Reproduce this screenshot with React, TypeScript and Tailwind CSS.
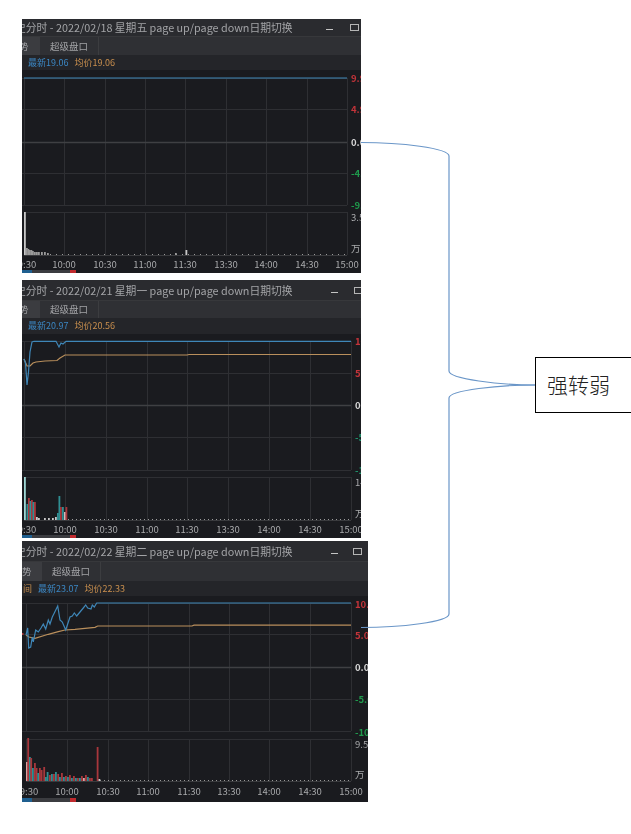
const TIMES = ["9:30", "10:00", "10:30", "11:00", "11:30", "13:30", "14:00", "14:30", "15:00"];

type Bar = [number, number, string];

const RED = "#a8373c";
const TEAL = "#2f8f93";
const GREY = "#9a9a9a";

type ChartData = {
  x: number;
  y: number;
  w: number;
  h: number;
  gridX: number[];
  gridY: number[];
  volTop: number;
  volBottom: number;
  labelX: number;
  timeY: number;
  labels: { text: string; y: number; color: string; bold?: boolean }[];
  price: string;
  avg?: string;
  bars: Bar[];
  stripY: number;
  stripH: number;
  edgeMarks?: number[];
};

// baseline ticks under the volume chart
function ticks(from: number, to: number, step: number): Bar[] {
  const out: Bar[] = [];
  for (let x = from; x < to; x += step) out.push([x, -1, GREY]);
  return out;
}

function Chart({ d }: { d: ChartData }) {
  const left = d.gridX[0];
  const right = d.gridX[d.gridX.length - 1];
  const mid = d.gridY[2];
  return (
    <svg className="block" width={d.w} height={d.h} viewBox={`${d.x} ${d.y} ${d.w} ${d.h}`}>
      <rect x={d.x} y={d.y} width={d.w} height={d.h} fill="#1a1b1f" />
      {d.gridX.map((x) => (
        <g key={x}>
          <line x1={x + 0.5} x2={x + 0.5} y1={d.gridY[0]} y2={d.gridY[4]} stroke="#2e2f33" />
          <line x1={x + 0.5} x2={x + 0.5} y1={d.volTop} y2={d.volBottom} stroke="#2e2f33" />
        </g>
      ))}
      {d.gridY.map((y) => (
        <line key={y} x1={d.x} x2={right} y1={y + 0.5} y2={y + 0.5} stroke="#2e2f33" />
      ))}
      <line x1={d.x} x2={right} y1={mid + 0.5} y2={mid + 0.5} stroke="#3f4043" strokeWidth="1.5" />
      <line x1={left} x2={right} y1={d.volTop + 0.5} y2={d.volTop + 0.5} stroke="#2e2f33" />
      <line x1={left} x2={right} y1={d.volBottom + 0.5} y2={d.volBottom + 0.5} stroke="#3a3b3e" />

      {d.bars.map(([x, top, color], i) => (
        <rect
          key={i}
          x={x}
          y={top < 0 ? d.volBottom + top : top}
          width={top < 0 ? 1 : 1.8}
          height={top < 0 ? -top : d.volBottom - top}
          fill={color}
        />
      ))}
      {d.edgeMarks?.map((y) => (
        <rect key={y} x={d.x} y={y} width="1.5" height="2" fill={RED} />
      ))}

      {d.avg && <polyline points={d.avg} fill="none" stroke="#b98f5c" strokeWidth="1.2" />}
      <polyline points={d.price} fill="none" stroke="#3f87b8" strokeWidth="1.2" />

      {d.labels.map((l) => (
        <text
          key={l.text}
          x={d.labelX}
          y={l.y}
          dominantBaseline="central"
          fontSize="9.5"
          fontWeight={l.bold ? 700 : 400}
          fill={l.color}
        >
          {l.text}
        </text>
      ))}
      {TIMES.map((t, i) => (
        <text
          key={t}
          x={i === 0 ? d.gridX[0] + 3 : d.gridX[i]}
          y={d.timeY}
          textAnchor="middle"
          dominantBaseline="central"
          fontSize="9.5"
          fill="#a9aaac"
        >
          {t}
        </text>
      ))}

      <rect x={d.x} y={d.stripY} width="54" height={d.stripH} fill="#3b3c40" />
      <rect x={d.x} y={d.stripY} width="10" height={d.stripH} fill="#1f5f8f" />
      <rect x={d.x + 48} y={d.stripY} width="6" height={d.stripH} fill="#c02a2e" />
    </svg>
  );
}

type PanelProps = {
  className: string;
  titleClass: string;
  tabClass: string;
  infoClass: string;
  controlsClass: string;
  activeClass: string;
  activeTextClass?: string;
  date: string;
  latest: string;
  average: string;
  chart: ChartData;
  clippedLabel?: boolean;
};

function Panel(p: PanelProps) {
  return (
    <div className={`flex flex-col overflow-hidden bg-[#1a1b1f] blur-[0.5px] ${p.className}`}>
      <div className={`flex items-center justify-between border-b border-[#37383b] bg-[#2a2b2f] ${p.titleClass}`}>
        <span className="-ml-[7px] whitespace-nowrap text-[10.8px] text-[#a3a4a7]">史分时 - {p.date} page up/page down日期切换</span>
        <div className={`flex items-start ${p.controlsClass}`}>
          <span className="mt-[5px] h-px w-[7px] bg-[#c4c4c4]" />
          <span className="h-[7px] w-[9px] shrink-0 border border-[#b5b5b5]" />
        </div>
      </div>
      <div className={`flex items-stretch bg-[#2f3034] text-[9.5px] text-[#a3a4a7] ${p.tabClass}`}>
        <span className={`flex items-center bg-[#3b3c40] ${p.activeClass}`}>
          <span className={p.activeTextClass}>势</span>
        </span>
        <span className="flex items-center border-r border-[#3c3d40] px-[10px]">超级盘口</span>
      </div>
      <div className={`flex items-center gap-[6px] bg-[#242529] text-[9px] ${p.infoClass}`}>
        {p.clippedLabel && <span className="-ml-[7px] text-[#c98f4e]">间</span>}
        <span className="text-[#3b87c4]">最新{p.latest}</span>
        <span className="text-[#c98f4e]">均价{p.average}</span>
      </div>
      <Chart d={p.chart} />
    </div>
  );
}

const WHITE = "#d8d8d8";
const LRED = "#c3343a";
const LGREEN = "#1f9a4c";
const LGREY = "#a9aaac";

const chart1: ChartData = {
  x: 22,
  y: 70,
  w: 339,
  h: 203,
  gridX: [24, 64, 105, 145, 185, 226, 266, 307, 347],
  gridY: [78, 109, 142, 173, 205],
  volTop: 212,
  volBottom: 255,
  labelX: 351,
  timeY: 264,
  labels: [
    { text: "9.96", y: 78, color: LRED, bold: true },
    { text: "4.98", y: 109, color: LRED, bold: true },
    { text: "0.00", y: 142, color: WHITE, bold: true },
    { text: "-4.98", y: 173, color: LGREEN, bold: true },
    { text: "-9.96", y: 205, color: LGREEN, bold: true },
    { text: "3.51", y: 217, color: LGREY },
    { text: "万", y: 248, color: LGREY },
  ],
  price: "24,78 347,78",
  bars: [
    [24, 212, "#c8c8c8"],
    [26, 248, GREY],
    [27.5, 249, GREY],
    [29, 250, GREY],
    [30.5, 250, GREY],
    [32, 251, GREY],
    [34, 252, GREY],
    [36, 252, GREY],
    [38, 252, GREY],
    [41, 252, GREY],
    [44, 252, GREY],
    [47, 253, GREY],
    [175, 253, GREY],
    [185.5, 250, "#c8c8c8"],
    ...ticks(50, 347, 6),
  ],
  stripY: 270,
  stripH: 3,
};

const chart2: ChartData = {
  x: 22,
  y: 334,
  w: 339,
  h: 204,
  gridX: [24, 65, 106, 147, 187, 228, 269, 310, 351],
  gridY: [341, 373, 405, 437, 470],
  volTop: 477,
  volBottom: 520,
  labelX: 355,
  timeY: 529,
  labels: [
    { text: "10.0", y: 341, color: LRED, bold: true },
    { text: "5.00", y: 373, color: LRED, bold: true },
    { text: "0.00", y: 405, color: WHITE, bold: true },
    { text: "-5.00", y: 437, color: "#1f8f6a", bold: true },
    { text: "-10.0", y: 470, color: "#1f8f6a", bold: true },
    { text: "14.2", y: 482, color: LGREY },
    { text: "万", y: 513, color: LGREY },
  ],
  price: "24,359 25.5,363 27,385 28.5,372 30,352 32,342 34,341.3 56,341.3 59,347 61,343 63,344 66,341.3 351,341.3",
  avg: "24,359 27,366 30,366 33,363 36,362 45,361 57,360.5 60,358 65,355 187,355 189,354.5 351,354.5",
  bars: [
    [24, 477, "#9fd6d4"],
    [26.5, 504, TEAL],
    [28, 498, RED],
    [29.5, 501, TEAL],
    [31, 500, RED],
    [32.5, 502, TEAL],
    [34, 502, RED],
    [36, 517, "#c8c8c8"],
    [38, 518, "#c8c8c8"],
    [44, 518, "#c8c8c8"],
    [48, 518, "#c8c8c8"],
    [52, 518, "#c8c8c8"],
    [55, 517, "#c8c8c8"],
    [57, 513, TEAL],
    [58.5, 496, TEAL],
    [60, 507, RED],
    [62, 507, TEAL],
    [64, 512, "#d8b8b8"],
    [65.5, 507, RED],
    ...ticks(68, 351, 4),
  ],
  stripY: 535,
  stripH: 3,
};

const chart3: ChartData = {
  x: 22,
  y: 596,
  w: 346,
  h: 206,
  gridX: [26, 67, 108, 148, 189, 229, 269, 310, 351],
  gridY: [603, 634, 667, 699, 731],
  volTop: 739,
  volBottom: 781,
  labelX: 355,
  timeY: 791,
  labels: [
    { text: "10.02", y: 604, color: LRED, bold: true },
    { text: "5.01", y: 635, color: LRED, bold: true },
    { text: "0.00", y: 667, color: WHITE, bold: true },
    { text: "-5.01", y: 699, color: LGREEN, bold: true },
    { text: "-10.02", y: 732, color: LGREEN, bold: true },
    { text: "9.51", y: 744, color: LGREY },
    { text: "万", y: 774, color: LGREY },
  ],
  price:
    "26,635 27.7,628 28.7,648 30.7,647 32.3,637 33.3,642 35.7,630 38.3,632 41,628 43.3,624 45.7,629 48.3,620 50,624 52.3,617 54.3,613 57.7,606 60,620 62.3,622 65.7,630 70,617 72.3,616 74.3,613 76.7,616 80,612 83.3,608 85.7,605 87.7,608 91,609 92.3,605 94.3,607 96.7,603 351,603",
  avg: "26,635 29,637 35,638.3 48.3,634.3 58.3,631.7 65,630 75,629.3 95,627.3 97.7,626 192,626 194,625.2 351,625.2",
  bars: [
    [26, 762, "#d8a5a5"],
    [27.3, 738, RED],
    [29, 757, TEAL],
    [30.3, 758, RED],
    [32, 768, TEAL],
    [34, 763, RED],
    [35.7, 768, RED],
    [37.3, 773, TEAL],
    [39, 768, RED],
    [40.7, 770, RED],
    [43.3, 767, RED],
    [45, 777, TEAL],
    [46.7, 772, TEAL],
    [49, 775, RED],
    [51, 774, TEAL],
    [53, 774, RED],
    [55, 772, TEAL],
    [57.3, 774, RED],
    [59, 777, TEAL],
    [61, 773, RED],
    [63, 777, TEAL],
    [65, 776, RED],
    [67, 777, TEAL],
    [69, 775, RED],
    [71, 778, TEAL],
    [73, 776, RED],
    [75, 778, TEAL],
    [77, 778, RED],
    [79, 778, TEAL],
    [81, 776, RED],
    [83, 778, "#d8a5a5"],
    [85, 775, RED],
    [87, 777, TEAL],
    [89, 778, RED],
    [91, 778, RED],
    [96.7, 747, RED],
    [98.5, 779, "#c8c8c8"],
    ...ticks(100, 351, 4),
  ],
  stripY: 798,
  stripH: 4,
  edgeMarks: [633],
};

export default function App() {
  return (
    <div className="relative h-[834px] w-[631px] overflow-hidden bg-white font-['Noto_Sans_CJK_SC',sans-serif]">
      <div className="flex flex-col items-start pl-[22px] pt-[19px]">
        <Panel
          className="w-[339px]"
          titleClass="h-[18px]"
          tabClass="h-[18px]"
          infoClass="h-[15px] pl-[6px]"
          controlsClass="gap-[17px] pr-[2px]"
          activeClass="w-[18px]"
          activeTextClass="-ml-[3px]"
          date="2022/02/18 星期五"
          latest="19.06"
          average="19.06"
          chart={chart1}
        />
        <Panel
          className="mt-[7px] w-[339px]"
          titleClass="h-[21px]"
          tabClass="h-[17px]"
          infoClass="h-[16px] pl-[6px]"
          controlsClass="-mr-[2px] gap-[16px]"
          activeClass="w-[18px]"
          activeTextClass="-ml-[3px]"
          date="2022/02/21 星期一"
          latest="20.97"
          average="20.56"
          chart={chart2}
        />
        <Panel
          className="mt-[3px] w-[346px]"
          titleClass="h-[21px]"
          tabClass="h-[19px]"
          infoClass="h-[15px] pl-[8px]"
          controlsClass="gap-[15px] pr-[6px]"
          activeClass="w-[20px]"
          date="2022/02/22 星期二"
          latest="23.07"
          average="22.33"
          chart={chart3}
          clippedLabel
        />
      </div>

      {/* bracket connectors */}
      <svg className="pointer-events-none absolute inset-0" width="631" height="834" fill="none">
        <path d="M361 142.5 C 400 142.5 449 148 449 156 V 371 C 449 379 500 385 535 385" stroke="#6a96c8" strokeWidth="1.2" />
        <path d="M535 385 C 500 385 449 390 449 398 V 614 C 449 622 400 627.5 361 627.5" stroke="#6a96c8" strokeWidth="1.2" />
      </svg>

      <div className="absolute left-[535px] top-[357px] flex h-[56px] w-[97px] items-center border border-black bg-white pl-[11px] text-[21px] font-light text-[#222]">
        强转弱
      </div>
    </div>
  );
}
